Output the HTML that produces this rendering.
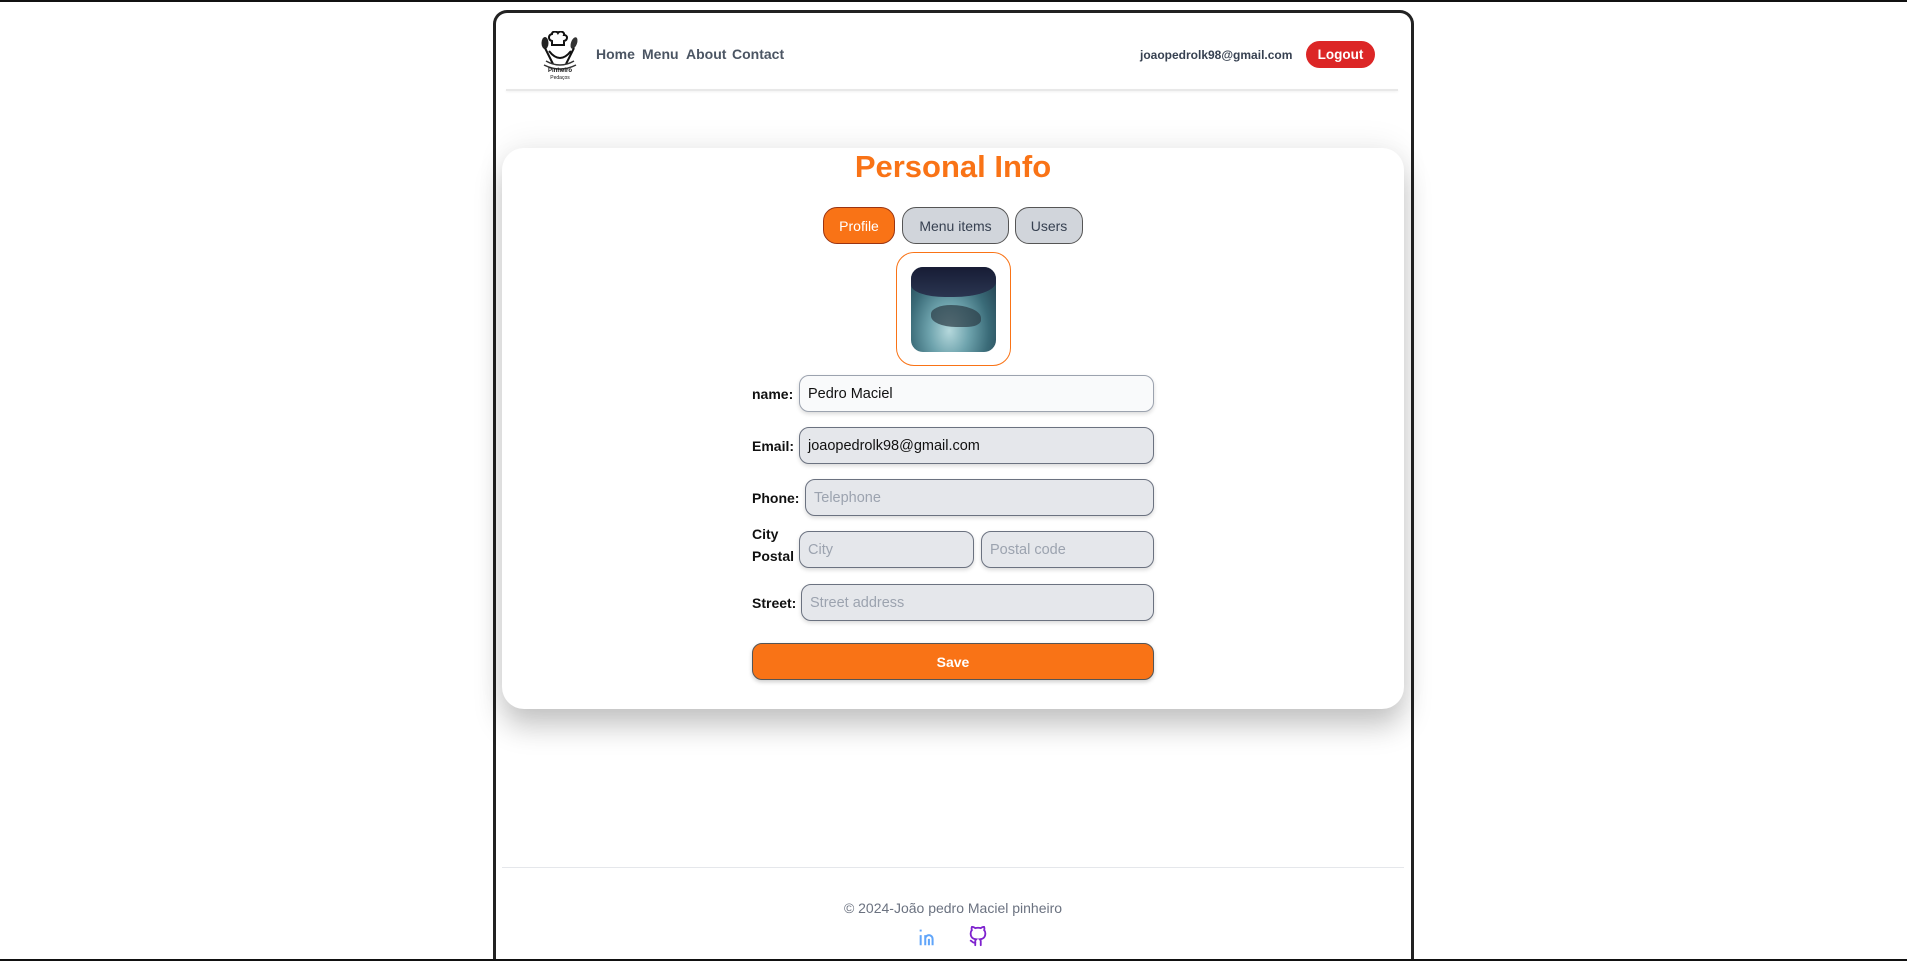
<!DOCTYPE html>
<html><head><meta charset="utf-8"><style>
*{box-sizing:border-box;margin:0;padding:0}
html,body{width:1907px;height:961px;overflow:hidden;background:#fff}
body{font-family:"Liberation Sans",Arial,sans-serif}
.wrap{position:relative;width:1907px;height:961px;overflow:hidden}
.frame{position:absolute;left:493px;top:10px;width:921px;height:951px;border:3px solid #222;border-bottom:none;border-radius:14px 14px 0 0;background:#fff}
.abs{position:absolute}
.nav a{position:absolute;top:46px;font-size:14px;font-weight:bold;color:#4b5563;text-decoration:none}
.hline{position:absolute;left:506px;width:892px;top:89px;height:2px;background:#e8e8e8;box-shadow:0 1px 2px rgba(0,0,0,.06)}
.card{position:absolute;left:502px;top:148px;width:902px;height:561px;background:#fff;border-radius:22px;box-shadow:0 18px 28px rgba(0,0,0,.22),0 -6px 30px rgba(0,0,0,.06)}
.tab{position:absolute;top:207px;height:37px;border:1px solid #555;border-radius:14px;background:#d1d5db;color:#374151;font-size:14px;display:flex;align-items:center;justify-content:center}
.lbl{position:absolute;left:752px;font-size:14px;font-weight:bold;color:#111}
.inp{position:absolute;height:37px;border:1px solid #6b7280;border-radius:10px;background:#e5e7eb;font-size:14.5px;color:#9ca3af;padding-left:8px;display:flex;align-items:center;box-shadow:0 2px 4px rgba(0,0,0,.15)}
</style></head><body><div class="wrap">
<div class="abs" style="left:0;top:0;width:1907px;height:2px;background:#111"></div>
<div class="frame"></div>
<svg class="abs" style="left:539px;top:31px" width="42" height="50" viewBox="0 0 42 50">
<path d="M13 3c0-3 5-3 6-1 2-3 7-1 6 2 4 0 4 5 0 6v4h-12v-4c-4-1-4-6 0-7z" fill="#fff" stroke="#111" stroke-width="2"/>
<ellipse cx="6" cy="12" rx="3.5" ry="6" fill="#222"/><ellipse cx="35" cy="12" rx="3" ry="6" fill="#333" transform="rotate(20 35 12)"/>
<path d="M6 17l8 16M35 17l-8 16M10 20q11 14 22 0" stroke="#111" stroke-width="2" fill="none"/>
<path d="M7 30q14 8 28 0M5 34q16 8 32 0" stroke="#333" stroke-width="1.5" fill="none"/>
<text x="21" y="41" font-size="6" text-anchor="middle" font-weight="bold" fill="#111">Pinheiro</text>
<text x="21" y="48" font-size="5" text-anchor="middle" fill="#111">Pedaços</text>
</svg>
<div class="nav"><a style="left:596px">Home</a><a style="left:642px">Menu</a><a style="left:686px">About</a><a style="left:732px">Contact</a></div>
<div class="abs" style="left:1140px;top:48px;font-size:12px;font-weight:bold;color:#374151">joaopedrolk98@gmail.com</div>
<div class="abs" style="left:1306px;top:41px;width:69px;height:27px;border-radius:14px;background:#dc2626;color:#fff;font-size:13.5px;font-weight:bold;display:flex;align-items:center;justify-content:center">Logout</div>
<div class="hline"></div>
<div class="card"></div>
<div class="abs" style="left:502px;width:902px;top:149px;text-align:center;font-size:31px;font-weight:bold;color:#f97316">Personal Info</div>
<div class="tab" style="left:823px;width:72px;background:#f97316;color:#fff;border-color:#9a3412">Profile</div>
<div class="tab" style="left:902px;width:107px">Menu items</div>
<div class="tab" style="left:1015px;width:68px">Users</div>
<div class="abs" style="left:896px;top:252px;width:115px;height:114px;border:1.5px solid #f97316;border-radius:18px;background:#fff"></div>
<div class="abs" style="left:911px;top:267px;width:85px;height:85px;border-radius:12px;background:radial-gradient(ellipse at 45% 75%,#b5d8dc 0%,#6ea3ad 30%,#3a6b78 60%,#1c3444 100%);overflow:hidden"><div style="position:absolute;left:0;top:0;width:85px;height:30px;background:linear-gradient(#171c35,#2a3550);border-radius:0 0 50% 40%"></div><div style="position:absolute;left:20px;top:38px;width:50px;height:22px;background:#2b3b45;border-radius:40% 60% 30% 50%;opacity:.7"></div></div>
<div class="lbl" style="top:386px">name:</div>
<div class="inp" style="left:799px;top:375px;width:355px;background:#f9fafb;color:#111;border-color:#9ca3af">Pedro Maciel</div>
<div class="lbl" style="top:438px">Email:</div>
<div class="inp" style="left:799px;top:427px;width:355px;color:#111">joaopedrolk98@gmail.com</div>
<div class="lbl" style="top:490px">Phone:</div>
<div class="inp" style="left:805px;top:479px;width:349px">Telephone</div>
<div class="lbl" style="top:523px;line-height:22px">City<br>Postal</div>
<div class="inp" style="left:799px;top:531px;width:175px">City</div>
<div class="inp" style="left:981px;top:531px;width:173px">Postal code</div>
<div class="lbl" style="top:595px">Street:</div>
<div class="inp" style="left:801px;top:584px;width:353px">Street address</div>
<div class="abs" style="left:752px;top:643px;width:402px;height:37px;border:1px solid #555;border-radius:10px;background:#f97316;color:#fff;font-weight:bold;font-size:14px;display:flex;align-items:center;justify-content:center;box-shadow:0 2px 4px rgba(0,0,0,.2)">Save</div>
<div class="abs" style="left:502px;top:867px;width:902px;height:1px;background:#e5e7eb"></div>
<div class="abs" style="left:502px;width:902px;top:900px;text-align:center;font-size:14px;color:#6b7280">© 2024-João pedro Maciel pinheiro</div>
<svg class="abs" style="left:917px;top:926px" width="22" height="22" viewBox="0 0 24 24" fill="none" stroke="#60a5fa" stroke-width="2.2"><path d="M4 10v11M4 4v2M9 21v-11M9 14a4 4 0 0 1 8 0v7M13 14v7"/></svg>
<svg class="abs" style="left:967px;top:926px" width="22" height="22" viewBox="0 0 24 24" fill="none" stroke="#7e22ce" stroke-width="2" stroke-linecap="round"><path d="M9 21v-4a3 3 0 0 1 1-2.5c-3-.4-6-1.5-6-6.5a5 5 0 0 1 1.3-3.5 4.6 4.6 0 0 1 .1-3.5s1.1-.3 3.6 1.3a12 12 0 0 1 6 0C17.5.7 18.6 1 18.6 1a4.6 4.6 0 0 1 .1 3.5A5 5 0 0 1 20 8c0 5-3 6.1-6 6.5a3 3 0 0 1 1 2.5v4"/><path d="M9 18c-3 1-3-1.5-5-2"/></svg>
<div class="abs" style="left:0;top:959px;width:1907px;height:2px;background:#111"></div>
</div></body></html>
